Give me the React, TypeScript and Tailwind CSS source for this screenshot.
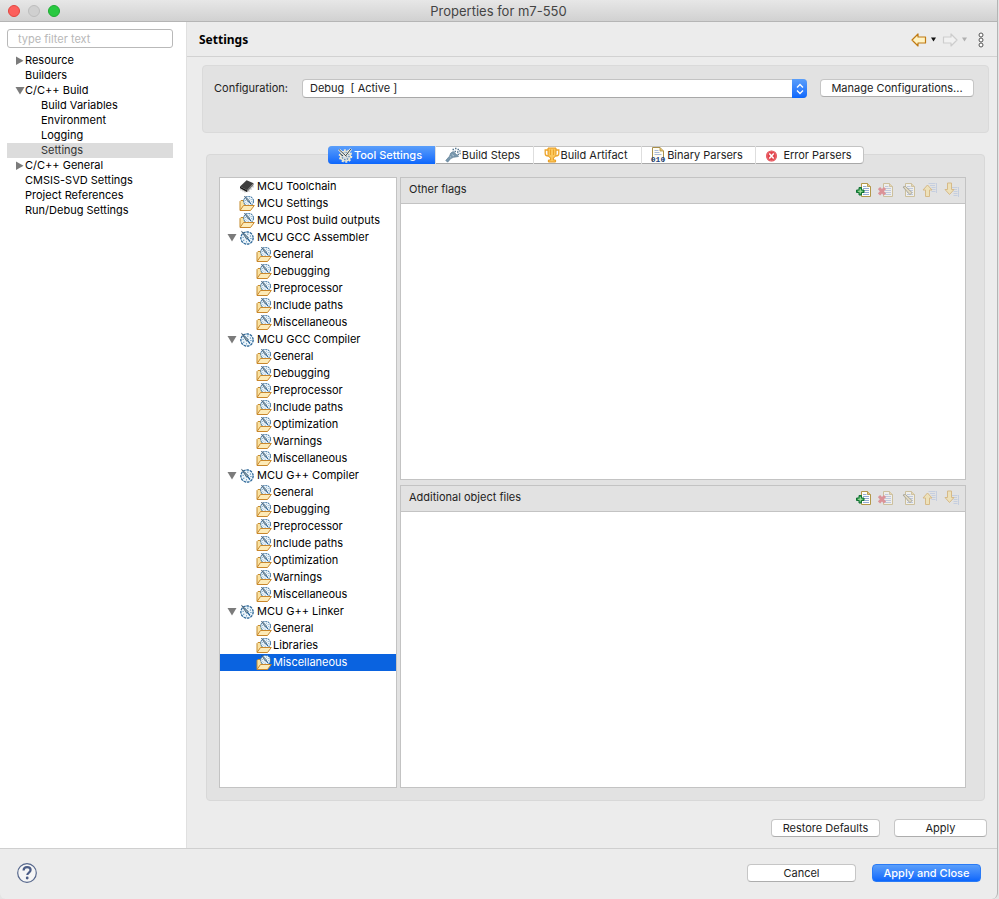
import { useState } from 'react';
import type { ComponentType, ReactNode } from 'react';
import clsx from 'clsx';

type Icon = ComponentType;

// Dial with tick marks and a needle, shared by the tool and option icons
function Dial() {
  return (
    <>
      <circle cx="8" cy="8" r="6" fill="#eef6fb" stroke="#9dbfd8" strokeWidth="0.8" />
      <circle cx="8" cy="8" r="6.2" fill="none" stroke="#2c6596" strokeWidth="1.2" strokeDasharray="2.4 1.1" />
      <circle cx="8" cy="8" r="3.9" fill="none" stroke="#3f7fb0" strokeWidth="1.2" strokeDasharray="0.9 2.16" />
      <path d="M2.6 1.4l6.8 6.2-1.7 1.7z" fill="#8ea7b8" stroke="#27465f" strokeWidth="0.7" />
      <path d="M8.4 8.4l2.6 3" stroke="#1f5c90" strokeWidth="1.3" />
    </>
  );
}

function ToolIcon() {
  return (
    <svg viewBox="0 0 16 16" className="size-4 shrink-0" aria-hidden="true">
      <Dial />
    </svg>
  );
}

function ToolSettingsIcon() {
  return (
    <svg viewBox="0 0 16 16" className="size-4 shrink-0" aria-hidden="true">
      <circle cx="8.5" cy="9" r="5" fill="#cfd9e2" stroke="#f3ecd2" strokeWidth="1.2" />
      <circle cx="8.5" cy="9" r="6" fill="none" stroke="#f3ecd2" strokeWidth="1.6" strokeDasharray="2 1.7" />
      <circle cx="8.5" cy="9" r="3.6" fill="none" stroke="#4c7ba3" strokeWidth="1.1" strokeDasharray="1.2 1.6" />
      <path d="M2 2.5l7 7M14 2l-5.500 7" stroke="#f5f2e6" strokeWidth="2.400" />
      <path d="M2 2.500l7.500 7M13.800 2L8.500 9M3 6.500l3 2.500" stroke="#34454f" strokeWidth="1" />
    </svg>
  );
}

function OptionsIcon() {
  return (
    <svg viewBox="0 0 16 16" className="size-4 shrink-0" aria-hidden="true">
      <path d="M1 14V5.500L2 4.500h3L6.500 6H11v4" fill="#fbe3a2" stroke="#c48a2c" />
      <g transform="translate(3.200 -1.200) scale(.8)">
        <Dial />
      </g>
      <path d="M1 14.500L4.500 9.500h10.800L11.500 14.500z" fill="#fdebb8" stroke="#c9872b" strokeLinejoin="round" />
    </svg>
  );
}

function ChipIcon() {
  return (
    <svg viewBox="0 0 16 16" className="size-4 shrink-0" aria-hidden="true">
      <path d="M1 7.500L7.600 1.200l7 3-6.400 7z" fill="#3e3e3e" />
      <path d="M1 7.500l7.200 3.700v2L1 9.200z" fill="#1d1d1d" />
      <path d="M8.200 11.200l6.400-7v1.900l-6.400 7z" fill="#757575" />
      <path d="M2 10v1.400M4 11v1.400M6 12v1.400M10 11.500v1.200M12 9.300v1.400M14 7.100v1.400" stroke="#8a8a8a" strokeWidth="0.8" />
    </svg>
  );
}

function StepsIcon() {
  return (
    <svg viewBox="0 0 16 16" className="size-4 shrink-0" aria-hidden="true">
      <path d="M2.600 15.200L.8 13.400l3.700-4.200L5.800 6l2.400-1.500 5.300 5-5 .8-2.700 1.200z" fill="#7897ad" stroke="#5d7d94" strokeWidth="0.700" />
      <path d="M7.500 2.500H9M10 1.500h1.500M12.500 2.500H14M9.500 4.500H11M12 5h1.500M14.300 4h1.200M12.500 7.500H14M14.500 6.500h1.200" stroke="#557690" strokeWidth="1.300" />
      <path d="M6.800 7.500L9 9M5 9.500l1.200 1" stroke="#b9cbd8" strokeWidth="0.900" />
    </svg>
  );
}

function TrophyIcon() {
  return (
    <svg viewBox="0 0 16 16" className="size-4 shrink-0" aria-hidden="true">
      <path d="M4 3H1.200v3.400C1.200 8.200 2.500 9 4.600 9M12 3h2.800v3.400c0 1.800-1.300 2.600-3.400 2.600" fill="none" stroke="#eda52c" strokeWidth="1.300" />
      <path d="M4 1h8v6.400c0 1.800-1.200 3-2.600 3.300V13h2.200v2H4.400v-2h2.200v-2.300C5.200 10.400 4 9.200 4 7.400z" fill="#fbc75c" stroke="#e79a1f" />
      <path d="M6.500 2.500v5.500M9.500 2.500v5.500" stroke="#e79a1f" strokeWidth="0.800" />
    </svg>
  );
}

function BinaryIcon() {
  return (
    <svg viewBox="0 0 16 16" className="size-4 shrink-0" aria-hidden="true">
      <path d="M2.500 15V.500h7.500l3.500 3.500v11" fill="#fffdf3" stroke="#a98f4a" />
      <path d="M10 .500V4h3.500" fill="#e8c36c" stroke="#a98f4a" strokeWidth="0.800" />
      <path d="M4.500 3.500h4M4.500 5.500h5M4.500 7.500h7" stroke="#a9b9d8" />
      <text x="8" y="14.500" textAnchor="middle" fontSize="8" fontWeight="700" fill="#1c4382" fontFamily="Liberation Mono, monospace">
        010
      </text>
    </svg>
  );
}

function ErrorIcon() {
  return (
    <svg viewBox="0 0 16 16" className="mr-[2px] size-4 shrink-0" aria-hidden="true">
      <circle cx="7.500" cy="9" r="5.500" fill="#e2434c" />
      <circle cx="7.500" cy="9" r="4.600" fill="none" stroke="#f08a8d" strokeWidth="0.600" />
      <path d="M5.300 6.500l4.400 5M9.700 6.500l-4.400 5" stroke="#fff" strokeWidth="1.500" />
    </svg>
  );
}

function Page() {
  return (
    <>
      <path d="M5.500 1.500h6l3 3v10h-9z" fill="#fffef8" stroke="#b3974a" />
      <path d="M11.500 1.500v3h3" fill="#e9c87c" stroke="#a68c3f" strokeWidth="0.800" />
      <path d="M7 4.500h3.500M7 6.500h6M7 8.500h6M7 10.500h6M7 12.500h6" stroke="#93aad6" />
    </>
  );
}

function Lines({ y }: { y: number }) {
  return (
    <path
      transform={`translate(0 ${y})`}
      d="M6.500 .500h7M8 2.500h5M9.500 4.500h4M9.500 6.500h4M9.500 8.500h4M14.500 0v10"
      stroke="#a3b6dc"
      fill="none"
    />
  );
}

const TOOLBAR: { label: string; enabled?: boolean; art: ReactNode }[] = [
  {
    label: 'Add',
    enabled: true,
    art: (
      <>
        <Page />
        <path d="M3 5.500h2.500V8H8v2.500H5.500V13H3v-2.500H.500V8H3z" fill="#2f9d4c" stroke="#137235" />
        <path d="M4.250 7v4.500M2 9.250h4.500" stroke="#a9e2a0" />
      </>
    ),
  },
  {
    label: 'Delete',
    art: (
      <>
        <Page />
        <path d="M1 6l6 6.500M7 6l-6 6.500" stroke="#d33340" strokeWidth="3" />
      </>
    ),
  },
  {
    label: 'Edit',
    art: (
      <>
        <Page />
        <path d="M3 5l2.500-.500 6.500 6-2 2.300z" fill="#e0cf98" stroke="#66624c" />
      </>
    ),
  },
  {
    label: 'Move Up',
    art: (
      <>
        <Lines y={1} />
        <path d="M5.500 3l4.500 5H7.500v6.500h-4V8H1z" fill="#fbe08b" stroke="#c88a1c" strokeLinejoin="round" />
      </>
    ),
  },
  {
    label: 'Move Down',
    art: (
      <>
        <Lines y={5} />
        <path d="M5.500 12.500l4.500-5H7.500V1h-4v6.500H1z" fill="#fbe08b" stroke="#c88a1c" strokeLinejoin="round" />
      </>
    ),
  },
];

const NAV = [
  { label: 'Resource', arrow: 'right' },
  { label: 'Builders' },
  { label: 'C/C++ Build', arrow: 'down' },
  { label: 'Build Variables', child: true },
  { label: 'Environment', child: true },
  { label: 'Logging', child: true },
  { label: 'Settings', child: true },
  { label: 'C/C++ General', arrow: 'right' },
  { label: 'CMSIS-SVD Settings' },
  { label: 'Project References' },
  { label: 'Run/Debug Settings' },
];

const TABS: { label: string; icon: Icon; width: string }[] = [
  { label: 'Tool Settings', icon: ToolSettingsIcon, width: 'w-[108px]' },
  { label: 'Build Steps', icon: StepsIcon, width: 'w-[98px]' },
  { label: 'Build Artifact', icon: TrophyIcon, width: 'w-[108px]' },
  { label: 'Binary Parsers', icon: BinaryIcon, width: 'w-[114px]' },
  { label: 'Error Parsers', icon: ErrorIcon, width: 'w-[108px]' },
];

const COMPILER = ['General', 'Debugging', 'Preprocessor', 'Include paths', 'Optimization', 'Warnings', 'Miscellaneous'];

const TREE: { label: string; icon: Icon; children?: string[] }[] = [
  { label: 'MCU Toolchain', icon: ChipIcon },
  { label: 'MCU Settings', icon: OptionsIcon },
  { label: 'MCU Post build outputs', icon: OptionsIcon },
  {
    label: 'MCU GCC Assembler',
    icon: ToolIcon,
    children: ['General', 'Debugging', 'Preprocessor', 'Include paths', 'Miscellaneous'],
  },
  { label: 'MCU GCC Compiler', icon: ToolIcon, children: COMPILER },
  { label: 'MCU G++ Compiler', icon: ToolIcon, children: COMPILER },
  { label: 'MCU G++ Linker', icon: ToolIcon, children: ['General', 'Libraries', 'Miscellaneous'] },
];

function Arrow({ dir }: { dir?: string }) {
  return (
    <svg viewBox="0 0 10 10" className="size-[10px] shrink-0" aria-hidden="true">
      {dir === 'right' && <path d="M1 .500l7.500 4.300L1 9z" fill="#7b7b7b" />}
      {dir === 'down' && <path d="M.500 1h9L5 8.500z" fill="#7b7b7b" />}
    </svg>
  );
}

function PushButton({ children, primary, className }: { children: ReactNode; primary?: boolean; className?: string }) {
  return (
    <button
      type="button"
      className={clsx(
        'h-[18px] rounded-[4px] border text-center leading-4 whitespace-nowrap',
        primary
          ? 'border-[#2a7bf6] bg-linear-to-b from-[#5a9efa] to-[#0a66fc] text-white'
          : 'border-[#c6c6c6] border-b-[#adadad] bg-white text-[#222]',
        className,
      )}
    >
      {children}
    </button>
  );
}

function ListPanel({ title }: { title: string }) {
  return (
    <section className="flex flex-col border border-[#c3c3c3] bg-white">
      <div className="flex h-[26px] items-center justify-between border-b border-[#c3c3c3] bg-[#e2e2e2] pr-[5px] pl-2">
        <h2 className="pb-[2px]">{title}</h2>
        <div className="flex gap-[6px] pb-[2px]">
          {TOOLBAR.map((tool) => (
            <button key={tool.label} type="button" aria-label={tool.label} disabled={!tool.enabled} className="disabled:opacity-45">
              <svg viewBox="0 0 16 16" className="size-4" aria-hidden="true">
                {tool.art}
              </svg>
            </button>
          ))}
        </div>
      </div>
    </section>
  );
}

export default function App() {
  const [page, setPage] = useState('Settings');
  const [tab, setTab] = useState('Tool Settings');
  const [selected, setSelected] = useState('MCU G++ Linker/Miscellaneous');

  return (
    <div className="min-h-screen bg-[#e4e4e4] pr-px font-['Inter','Liberation_Sans',sans-serif] text-[11px] leading-[15px] text-[#222]">
      <div className="flex min-h-screen flex-col overflow-hidden rounded-b-md border-r border-[#b4b4b4] bg-[#ececec]">
        {/* Title bar */}
        <header className="grid h-[22px] shrink-0 grid-cols-[1fr_auto_1fr] items-center border-b border-[#b5b5b5] bg-linear-to-b from-[#e7e7e7] to-[#d1d1d1] px-2">
          <div className="flex gap-2">
            <button type="button" aria-label="Close" className="size-3 rounded-full border border-[#e2463f] bg-[#fc605c]" />
            <button type="button" aria-label="Minimize" className="size-3 rounded-full border border-[#bdbdbd] bg-[#d0d0d0]" />
            <button type="button" aria-label="Zoom" className="size-3 rounded-full border border-[#1eab32] bg-[#28c940]" />
          </div>
          <h1 className="pt-px text-[13px] text-[#444]">Properties for m7-550</h1>
        </header>

        <div className="flex flex-1">
          {/* Page list */}
          <aside className="w-[187px] shrink-0 border-r border-[#e0e0e0] bg-white px-[7px] pt-[7px] text-black">
            <input
              type="text"
              aria-label="Filter"
              placeholder="type filter text"
              className="mb-[5px] h-[19px] w-[166px] rounded-[3px] border border-[#b9b9b9] bg-white px-[10px] placeholder:text-[#b8b8b8]"
            />
            <ul className="w-[166px]">
              {NAV.map((item) => (
                <li key={item.label}>
                  <button
                    type="button"
                    onClick={() => setPage(item.label)}
                    className={clsx(
                      'flex h-[15px] w-full items-center whitespace-nowrap',
                      item.child ? 'pl-6' : 'pl-2',
                      page === item.label && 'bg-[#dcdcdc] text-[#333]',
                    )}
                  >
                    <Arrow dir={item.arrow} />
                    {item.label}
                  </button>
                </li>
              ))}
            </ul>
          </aside>

          <main className="flex min-w-0 flex-1 flex-col">
            <div className="flex h-[35px] shrink-0 items-center justify-between border-b border-[#d2d2d2] pr-3 pl-3">
              <h2 className="font-['Noto_Sans',sans-serif] text-[12px] font-bold text-black">Settings</h2>
              <div className="flex items-center gap-[6px] pt-px">
                <button type="button" aria-label="Back" className="flex items-center gap-1">
                  <svg viewBox="0 0 16 14" className="h-[14px] w-4" aria-hidden="true">
                    <path d="M7 1v3h7.500v6H7v3L1 7z" fill="#fff3c4" stroke="#c07a12" strokeWidth="1.200" strokeLinejoin="round" />
                  </svg>
                  <svg viewBox="0 0 5 5" className="size-[5px]" aria-hidden="true">
                    <path d="M0 .500h5l-2.500 4z" fill="#111" />
                  </svg>
                </button>
                <button type="button" aria-label="Forward" disabled className="flex items-center gap-1">
                  <svg viewBox="0 0 16 14" className="h-[14px] w-4" aria-hidden="true">
                    <path d="M9 1v3H1.500v6H9v3l6-6z" fill="#f1f1f1" stroke="#cdcdcd" strokeWidth="1.200" strokeLinejoin="round" />
                  </svg>
                  <svg viewBox="0 0 5 5" className="size-[5px]" aria-hidden="true">
                    <path d="M0 .500h5l-2.500 4z" fill="#b0b0b0" />
                  </svg>
                </button>
                <button type="button" aria-label="Menu" className="ml-1">
                  <svg viewBox="0 0 8 16" className="h-4 w-2" aria-hidden="true">
                    <g fill="#fff" stroke="#555">
                      <circle cx="4" cy="3" r="2" />
                      <circle cx="4" cy="8" r="2" />
                      <circle cx="4" cy="13" r="2" />
                    </g>
                  </svg>
                </button>
              </div>
            </div>

            <div className="mt-2 mr-2 ml-[15px] flex h-[68px] shrink-0 items-start rounded-[4px] border border-[#dadada] bg-[#e2e2e2] pt-[13px] pr-[14px] pl-[11px]">
              <label htmlFor="configuration" className="w-[88px] pt-[2px]">
                Configuration:
              </label>
              <div className="relative mr-[13px] flex-1">
                <select
                  id="configuration"
                  className="block h-[19px] w-full appearance-none rounded-[4px] border border-[#c3c3c3] border-b-[#a8a8a8] bg-white pr-5 pl-[7px]"
                >
                  <option>{'Debug\u00a0 [ Active ]'}</option>
                </select>
                <span className="pointer-events-none absolute top-0 right-0 flex h-[19px] w-[15px] items-center justify-center rounded-r-[4px] bg-linear-to-b from-[#5a9efa] to-[#0a66fc]">
                  <svg viewBox="0 0 8 12" className="h-3 w-2" aria-hidden="true">
                    <path d="M1 4.500l3-3 3 3M1 7.500l3 3 3-3" fill="none" stroke="#fff" strokeWidth="1.300" />
                  </svg>
                </span>
              </div>
              <PushButton className="w-[154px]">Manage Configurations...</PushButton>
            </div>

            {/* Tab strip straddles the top edge of the panel */}
            <div
              role="tablist"
              className="relative z-10 mt-[13px] mr-3 -mb-[10px] ml-[19px] flex h-[18px] shrink-0 self-center rounded-[4px] border border-[#c3c3c3] border-b-[#a8a8a8] bg-white"
            >
              {TABS.map(({ label, icon: TabIcon, width }) => (
                <button
                  key={label}
                  type="button"
                  role="tab"
                  aria-selected={tab === label}
                  onClick={() => setTab(label)}
                  className={clsx(
                    '-my-px flex h-[18px] items-center justify-center gap-px border-r border-[#dedede] pr-[3px] whitespace-nowrap first:-ml-px first:rounded-l-[4px] last:-mr-px last:rounded-r-[4px] last:border-r-0',
                    width,
                    tab === label && 'bg-linear-to-b from-[#5a9efa] to-[#0a66fc] font-medium text-white',
                  )}
                >
                  <TabIcon />
                  {label}
                </button>
              ))}
            </div>

            <div className="mr-3 ml-[19px] flex flex-1 gap-[3px] rounded-[4px] border border-[#d8d8d8] bg-[#e2e2e2] pt-[22px] pr-[18px] pb-3 pl-3">
              <ul role="tree" className="w-[178px] shrink-0 border border-[#c3c3c3] bg-white text-black">
                {TREE.map(({ label, icon: NodeIcon, children }) => (
                  <li key={label} role="treeitem" aria-expanded={children ? true : undefined}>
                    <button type="button" onClick={() => setSelected(label)} className="flex h-[17px] w-full items-center pl-[7px] whitespace-nowrap">
                      <Arrow dir={children && 'down'} />
                      <span className="ml-[2px] flex items-center gap-[2px]">
                        <NodeIcon />
                        {label}
                      </span>
                    </button>
                    {children && (
                      <ul role="group">
                        {children.map((name) => {
                          const id = `${label}/${name}`;
                          return (
                            <li key={id} role="treeitem" aria-selected={selected === id}>
                              <button
                                type="button"
                                onClick={() => setSelected(id)}
                                className={clsx(
                                  'flex h-[17px] w-full items-center gap-px pl-9 whitespace-nowrap',
                                  selected === id && 'bg-[#0a63e0] text-white',
                                )}
                              >
                                <OptionsIcon />
                                {name}
                              </button>
                            </li>
                          );
                        })}
                      </ul>
                    )}
                  </li>
                ))}
              </ul>
              <div className="grid min-w-0 flex-1 grid-rows-2 gap-[5px]">
                <ListPanel title="Other flags" />
                <ListPanel title="Additional object files" />
              </div>
            </div>

            <div className="flex shrink-0 justify-end gap-[14px] pt-[18px] pr-[10px] pb-[11px]">
              <PushButton className="w-[109px]">Restore Defaults</PushButton>
              <PushButton className="w-[93px]">Apply</PushButton>
            </div>
          </main>
        </div>

        <footer className="flex h-[51px] shrink-0 items-center justify-between border-t border-[#cfcfcf] px-4 pb-[2px]">
          <button type="button" aria-label="Help" className="size-[22px]">
            <svg viewBox="0 0 22 22" className="size-[22px]" aria-hidden="true">
              <circle cx="11" cy="11" r="9.300" fill="#f5f5f5" stroke="#56678c" strokeWidth="1.200" />
              <path d="M7.600 8.600c0-2.300 1.400-3.500 3.500-3.500s3.500 1.200 3.500 3c0 2.500-3.300 2.500-3.300 5" fill="none" stroke="#4c5d86" strokeWidth="2.200" />
              <circle cx="11.200" cy="16" r="1.400" fill="#4c5d86" />
            </svg>
          </button>
          <div className="flex gap-4">
            <PushButton className="w-[109px]">Cancel</PushButton>
            <PushButton primary className="w-[109px] font-medium">
              Apply and Close
            </PushButton>
          </div>
        </footer>
      </div>
    </div>
  );
}
